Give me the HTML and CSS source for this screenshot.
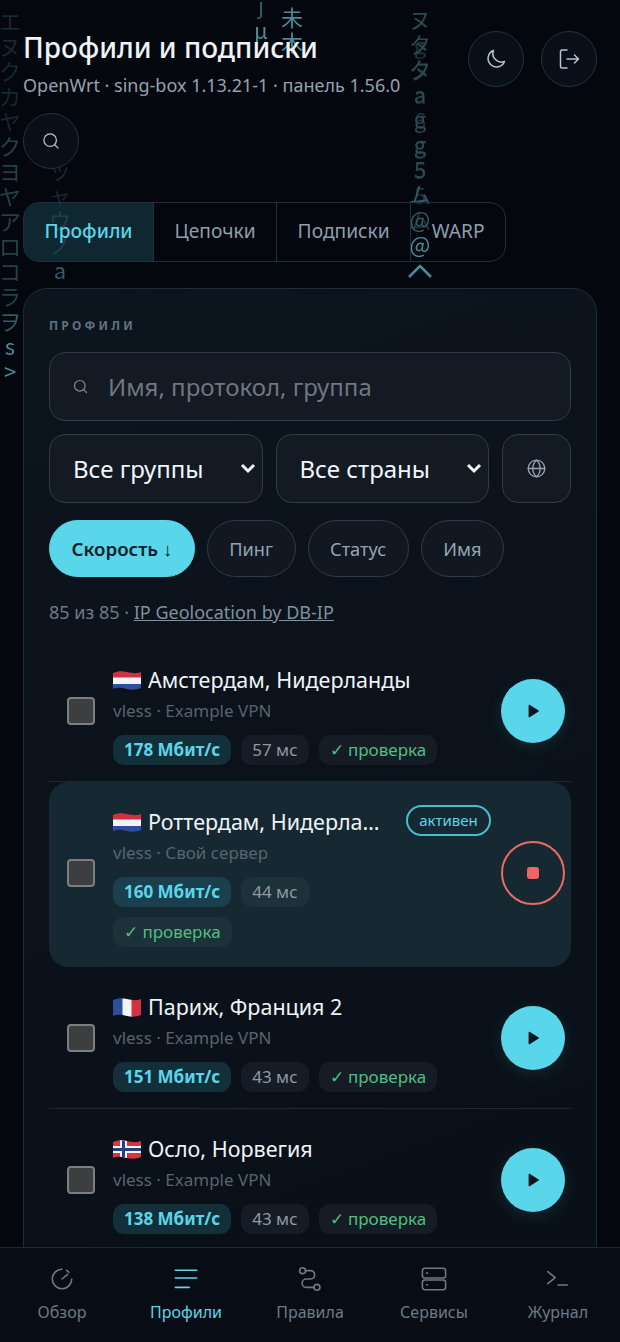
FILE: index.html
```html
<!DOCTYPE html>
<html lang="ru">
<head>
  <meta charset="UTF-8">
  <meta name="viewport" content="width=device-width, initial-scale=1.0">
  <title>Профили и подписки</title>
  <link rel="stylesheet" href="styles.css">
</head>
<body>

  <!-- Flags, reused by the rows -->
  <svg class="defs" aria-hidden="true">
    <clipPath id="wave"><path d="M0 3C5 1 9 1 14 2s9 2 14 0v16c-5 2-9 2-14 1s-9-2-14 0z"/></clipPath>
    <symbol id="flag-nl" viewBox="0 0 28 21">
      <g clip-path="url(#wave)">
        <rect width="28" height="8" fill="#d3313f"/>
        <rect y="7.500" width="28" height="7" fill="#f3f4f6"/>
        <rect y="14" width="28" height="7" fill="#2b4f9c"/>
      </g>
    </symbol>
    <symbol id="flag-fr" viewBox="0 0 28 21">
      <g clip-path="url(#wave)">
        <rect width="10" height="21" fill="#2b4f9c"/>
        <rect x="9.500" width="9.500" height="21" fill="#f3f4f6"/>
        <rect x="18.500" width="9.500" height="21" fill="#d3313f"/>
      </g>
    </symbol>
    <symbol id="flag-no" viewBox="0 0 28 21">
      <g clip-path="url(#wave)">
        <rect width="28" height="21" fill="#d8363f"/>
        <rect x="7" width="7" height="21" fill="#f3f4f6"/>
        <rect y="7" width="28" height="7" fill="#f3f4f6"/>
        <rect x="9" width="3" height="21" fill="#27407f"/>
        <rect y="9" width="28" height="3" fill="#27407f"/>
      </g>
    </symbol>
  </svg>

  <!-- Falling glyphs behind the page -->
  <div class="rain" aria-hidden="true">
    <div class="drop drop-a"><span class="low">エヌクカヤ</span>クヨヤアロコラ<span class="mid">ヲ</span><b>s</b><b>&gt;</b></div>
    <div class="drop drop-b"><span class="low">ッャ</span>ウノ<span class="mid">a</span></div>
    <div class="drop drop-c">j<b>µ</b></div>
    <div class="drop drop-d"><b>未</b><b>木</b></div>
    <div class="drop drop-f">gタa6g55ム</div>
    <div class="drop drop-e">ヌタタagg5<span class="mid">ム@</span><b>@</b>
      <svg class="caret" viewBox="0 0 26 14"><path d="M2 13L13 2l11 11"/></svg>
    </div>
  </div>

  <main class="page">
    <header class="top">
      <div class="top-text">
        <h1>Профили и подписки</h1>
        <p>OpenWrt · sing-box 1.13.21-1 · панель 1.56.0</p>
      </div>
      <button class="round">
        <svg viewBox="0 0 24 24"><path d="M20.500 14.500A8.500 8.500 0 0 1 9.500 3.500a8.500 8.500 0 1 0 11 11z"/></svg>
      </button>
      <button class="round">
        <svg viewBox="0 0 24 24"><path d="M10 3H5a1.500 1.500 0 0 0-1.500 1.500v15A1.500 1.500 0 0 0 5 21h5M10 12h11.500M17.500 8l4 4-4 4"/></svg>
      </button>
    </header>

    <button class="round round-search">
      <svg viewBox="0 0 24 24"><circle cx="11" cy="11" r="7.500"/><path d="M16.500 16.500l4 4"/></svg>
    </button>

    <nav class="tabs">
      <a class="tab active">Профили</a>
      <a class="tab">Цепочки</a>
      <a class="tab">Подписки</a>
      <a class="tab">WARP</a>
    </nav>

    <section class="panel">
      <h2>Профили</h2>

      <label class="search">
        <svg viewBox="0 0 24 24"><circle cx="11" cy="11" r="7.500"/><path d="M16.500 16.500l4 4"/></svg>
        <input type="text" placeholder="Имя, протокол, группа">
      </label>

      <div class="filters">
        <select><option>Все группы</option></select>
        <select><option>Все страны</option></select>
        <button class="globe">
          <svg viewBox="0 0 24 24"><circle cx="12" cy="12" r="9.500"/><path d="M2.500 12h19M12 2.500c3 2.600 4.200 5.800 4.200 9.500s-1.200 6.900-4.200 9.500c-3-2.600-4.200-5.800-4.200-9.500s1.200-6.900 4.200-9.500z"/></svg>
        </button>
      </div>

      <div class="sorts">
        <button class="sort on">Скорость ↓</button>
        <button class="sort">Пинг</button>
        <button class="sort">Статус</button>
        <button class="sort">Имя</button>
      </div>

      <p class="count">85 из 85 · <a href="#">IP Geolocation by DB-IP</a></p>

      <ul class="list">
        <li class="row">
          <input class="check" type="checkbox">
          <div class="info">
            <div class="name"><svg class="flag"><use href="#flag-nl"/></svg><span>Амстердам, Нидерланды</span></div>
            <div class="meta">vless · Example VPN</div>
            <div class="chips">
              <span class="chip speed">178 Мбит/с</span>
              <span class="chip">57 мс</span>
              <span class="chip ok">✓ проверка</span>
            </div>
          </div>
          <button class="run"><svg viewBox="0 0 24 24"><path d="M7 4.500v15l12-7.500z"/></svg></button>
        </li>

        <li class="row current">
          <input class="check" type="checkbox">
          <div class="info">
            <div class="name"><svg class="flag"><use href="#flag-nl"/></svg><span>Роттердам, Нидерланды</span><em class="live">активен</em></div>
            <div class="meta">vless · Свой сервер</div>
            <div class="chips">
              <span class="chip speed">160 Мбит/с</span>
              <span class="chip">44 мс</span>
              <span class="chip ok">✓ проверка</span>
            </div>
          </div>
          <button class="run stop"><i></i></button>
        </li>

        <li class="row">
          <input class="check" type="checkbox">
          <div class="info">
            <div class="name"><svg class="flag"><use href="#flag-fr"/></svg><span>Париж, Франция 2</span></div>
            <div class="meta">vless · Example VPN</div>
            <div class="chips">
              <span class="chip speed">151 Мбит/с</span>
              <span class="chip">43 мс</span>
              <span class="chip ok">✓ проверка</span>
            </div>
          </div>
          <button class="run"><svg viewBox="0 0 24 24"><path d="M7 4.500v15l12-7.500z"/></svg></button>
        </li>

        <li class="row">
          <input class="check" type="checkbox">
          <div class="info">
            <div class="name"><svg class="flag"><use href="#flag-no"/></svg><span>Осло, Норвегия</span></div>
            <div class="meta">vless · Example VPN</div>
            <div class="chips">
              <span class="chip speed">138 Мбит/с</span>
              <span class="chip">43 мс</span>
              <span class="chip ok">✓ проверка</span>
            </div>
          </div>
          <button class="run"><svg viewBox="0 0 24 24"><path d="M7 4.500v15l12-7.500z"/></svg></button>
        </li>
      </ul>
    </section>
  </main>

  <nav class="bottom">
    <a class="item">
      <svg viewBox="0 0 28 28"><path d="M14 3.500A10.500 10.500 0 1 0 24.500 14M14 14l6-5M19 4.800l2.500 2"/></svg>
      Обзор
    </a>
    <a class="item active">
      <svg viewBox="0 0 28 28"><path d="M2.500 4.500h23M2.500 13h23M2.500 23h15"/></svg>
      Профили
    </a>
    <a class="item">
      <svg viewBox="0 0 28 28"><circle cx="6" cy="5" r="3.200"/><circle cx="21.500" cy="23" r="3.200"/><path d="M9.200 5h5.300a4.500 4.500 0 0 1 0 9H10a4.500 4.500 0 0 0 0 9h8.300"/></svg>
      Правила
    </a>
    <a class="item">
      <svg viewBox="0 0 28 28"><rect x="1.500" y="2.500" width="25" height="10.500" rx="2.500"/><rect x="1.500" y="15" width="25" height="10.500" rx="2.500"/><path d="M6 7.700h1M6 20.200h1"/></svg>
      Сервисы
    </a>
    <a class="item">
      <svg viewBox="0 0 28 28"><path d="M3 6l8 6.500L3 19M14 20.500h10"/></svg>
      Журнал
    </a>
  </nav>

</body>
</html>
```

FILE: styles.css
```css
/* Global styles */
* {
  box-sizing: border-box;
}

body {
  position: relative;
  width: 620px;
  height: 1342px;
  margin: 0;
  overflow: hidden;
  background-color: #04070e;
  color: #eef4f8;
  font-family: 'Noto Sans', 'Open Sans', sans-serif;
}

button, input, select {
  font-family: inherit;
}

svg {
  fill: none;
  stroke: currentColor;
  stroke-width: 1.7;
  stroke-linecap: round;
  stroke-linejoin: round;
}

.defs {
  position: absolute;
  width: 0;
  height: 0;
}

/* Matrix rain */
.rain {
  position: absolute;
  top: 0;
  left: 0;
  width: 100%;
  height: 400px;
  filter: blur(0.4px);
}

.drop {
  position: absolute;
  width: 22px;
  color: #24414a;
  font-family: 'Noto Sans CJK JP', 'DejaVu Sans', sans-serif;
  font-size: 22px;
  line-height: 25px;
  text-align: center;
  word-break: break-all;
}

.drop .low {
  color: #162a31;
}

.drop .mid {
  color: #2f5c68;
}

.drop b {
  display: block;
  color: #4a8a99;
  font-weight: 400;
}

.drop-a {
  top: 8px;
  left: -1px;
}

.drop-b {
  top: 157px;
  left: 49px;
}

.drop-c {
  top: -8px;
  left: 250px;
  color: #2f5c68;
}

.drop-d {
  top: 4px;
  left: 281px;
}

.drop-e {
  top: 6px;
  left: 409px;
  color: #2c4a52;
}

.drop-f {
  top: 32px;
  left: 409px;
  color: #1f363d;
}

.caret {
  display: block;
  width: 26px;
  height: 14px;
  margin: 8px 0 0 -2px;
  color: #4a8a99;
  stroke-width: 2.5;
  stroke-linecap: butt;
}

/* Header */
.page {
  position: relative;
  padding: 31px 23px 0;
}

.top {
  display: flex;
  gap: 17px;
}

.top-text {
  flex: 1;
}

h1 {
  margin: 0;
  font-size: 28px;
  font-weight: 500;
  line-height: 32px;
}

.top-text p {
  margin: 9px 0 0;
  color: #93a3b0;
  font-size: 18px;
  line-height: 26px;
  white-space: nowrap;
}

.round {
  display: flex;
  align-items: center;
  justify-content: center;
  flex: none;
  width: 56px;
  height: 56px;
  padding: 0;
  border: 1px solid #24323d;
  border-radius: 50%;
  background-color: rgba(12, 19, 28, 0.7);
  color: #b4c4d0;
}

.round svg {
  width: 24px;
  height: 24px;
  stroke-width: 1.5;
}

.round-search {
  margin-top: 15px;
}

.round-search svg {
  width: 20px;
  height: 20px;
}

/* Tabs */
.tabs {
  display: inline-flex;
  margin-top: 33px;
  border: 1px solid #212f3a;
  border-radius: 16px;
  overflow: hidden;
  vertical-align: top;
}

.tab {
  height: 58px;
  padding: 0 20.500px;
  border-left: 1px solid #212f3a;
  color: #8d9fad;
  font-size: 19.200px;
  line-height: 56px;
}

.tab:first-child {
  border-left: none;
}

.tab.active {
  background-color: rgba(24, 66, 78, 0.55);
  color: #5ad6ea;
  font-weight: 500;
}

/* Panel */
.panel {
  height: 1100px;
  margin-top: 26px;
  padding: 26px 25px 25px;
  border: 1px solid #1e2c37;
  border-radius: 24px;
  background: linear-gradient(160deg, #0c141d, #090f17);
}

h2 {
  margin: 0 0 15px;
  color: #5f7280;
  font-size: 12px;
  font-weight: 700;
  letter-spacing: 3.200px;
  line-height: 22px;
  text-transform: uppercase;
}

.search {
  display: flex;
  align-items: center;
  gap: 17px;
  height: 69px;
  padding: 0 22px;
  border: 1px solid #2e3d4a;
  border-radius: 16px;
  background-color: #131a24;
  color: #7b8791;
}

.search svg {
  flex: none;
  width: 17px;
  height: 17px;
}

.search input {
  flex: 1;
  min-width: 0;
  border: none;
  outline: none;
  background: none;
  color: #eef4f8;
  font-size: 24px;
}

.search input::placeholder {
  color: #6f7780;
  opacity: 1;
}

.filters {
  display: grid;
  grid-template-columns: 1fr 1fr 69px;
  gap: 13px;
  margin-top: 13px;
}

select {
  height: 69px;
  padding: 0 0 0 23px;
  border: 1px solid #2e3d4a;
  border-radius: 16px;
  background: #131a24 url("data:image/svg+xml,%3Csvg xmlns='http://www.w3.org/2000/svg' viewBox='0 0 16 11'%3E%3Cpath d='M2 2l6 6 6-6' fill='none' stroke='%23f2f6f9' stroke-width='3'/%3E%3C/svg%3E") no-repeat right 6px center / 16px 11px;
  color: #f2f6f9;
  font-size: 24px;
  appearance: none;
}

.globe {
  padding: 0;
  border: 1px solid #2e3d4a;
  border-radius: 16px;
  background-color: #131a24;
  color: #94a5b2;
}

.globe svg {
  display: block;
  width: 21px;
  height: 21px;
  margin: auto;
  stroke-width: 1.5;
}

.sorts {
  display: flex;
  gap: 12px;
  margin-top: 17px;
}

.sort {
  height: 57px;
  padding: 0 21.500px;
  border: 1px solid #2e3d4a;
  border-radius: 29px;
  background-color: #111821;
  color: #93a5b3;
  font-size: 18.200px;
}

.sort.on {
  border-color: #5ad6ea;
  background-color: #5ad6ea;
  color: #06222c;
  font-size: 18.700px;
  font-weight: 600;
}

.count {
  margin: 22px 0 0;
  color: #6d7c88;
  font-size: 18px;
  line-height: 26px;
}

.count a {
  color: #7f919e;
}

/* Profile rows */
.list {
  margin: 15px 0 0;
  padding: 0;
  list-style: none;
}

.row {
  display: flex;
  align-items: center;
  padding: 16px 6px 16px 18px;
  border-bottom: 1px solid #1c2832;
}

.row.current {
  padding-top: 16px;
  padding-bottom: 20px;
  border-bottom: none;
  border-radius: 20px;
  background-color: #162932;
}

.check {
  flex: none;
  width: 28px;
  height: 28px;
  margin: 0 18px 0 0;
  border: 2px solid #7b7f82;
  border-radius: 4px;
  background-color: #3d3e40;
  appearance: none;
}

.info {
  flex: 1;
  min-width: 0;
  padding-top: 9px;
}

.name {
  display: flex;
  align-items: center;
  font-size: 21.500px;
  line-height: 30px;
}

.flag {
  flex: none;
  width: 28px;
  height: 21px;
  margin-right: 7px;
  stroke: none;
}

.name span {
  overflow: hidden;
  text-overflow: ellipsis;
  white-space: nowrap;
}

.live {
  flex: none;
  width: 85px;
  height: 31px;
  margin: -3px 0 0 25px;
  border: 2px solid #46bccf;
  border-radius: 16px;
  color: #5ad6ea;
  font-size: 15px;
  font-style: normal;
  line-height: 27px;
  text-align: center;
}

.meta {
  margin-top: 3px;
  color: #56646f;
  font-size: 17px;
  line-height: 26px;
}

.chips {
  display: flex;
  flex-wrap: wrap;
  gap: 10px;
  margin-top: 11px;
}

.current .chips {
  max-width: 300px;
}

.chip {
  height: 30px;
  padding: 0 11px;
  border-radius: 11px;
  background-color: #161c25;
  color: #8f9aa4;
  font-size: 17px;
  line-height: 30px;
}

.chip.speed {
  background-color: #122f3a;
  color: #5ad6ea;
  font-weight: 700;
}

.chip.ok {
  color: #4fbf80;
}

.current .chip {
  background-color: #1c313a;
}

.current .chip.speed {
  background-color: #1b3f4c;
}

.run {
  display: flex;
  align-items: center;
  justify-content: center;
  flex: none;
  width: 64px;
  height: 64px;
  margin-left: 10px;
  padding: 0;
  border: none;
  border-radius: 50%;
  background-color: #5ad6ea;
  box-shadow: 0 4px 16px rgba(90, 214, 234, 0.12);
  color: #07171e;
}

.run svg {
  width: 18px;
  height: 18px;
  fill: currentColor;
}

.run.stop {
  border: 2px solid #ef6a62;
  background: none;
  box-shadow: none;
}

.stop i {
  width: 12px;
  height: 12px;
  border-radius: 3px;
  background-color: #f2645f;
}

/* Bottom navigation */
.bottom {
  position: absolute;
  left: 0;
  right: 0;
  bottom: 0;
  display: grid;
  grid-template-columns: repeat(5, 1fr);
  height: 95px;
  border-top: 1px solid #1c2832;
  background-color: #080d15;
}

.item {
  display: flex;
  flex-direction: column;
  align-items: center;
  gap: 9px;
  padding-top: 18px;
  color: #6b7a86;
  font-size: 16px;
  line-height: 22px;
}

.item svg {
  width: 26px;
  height: 26px;
}

.item.active {
  color: #5ad6ea;
}
```
